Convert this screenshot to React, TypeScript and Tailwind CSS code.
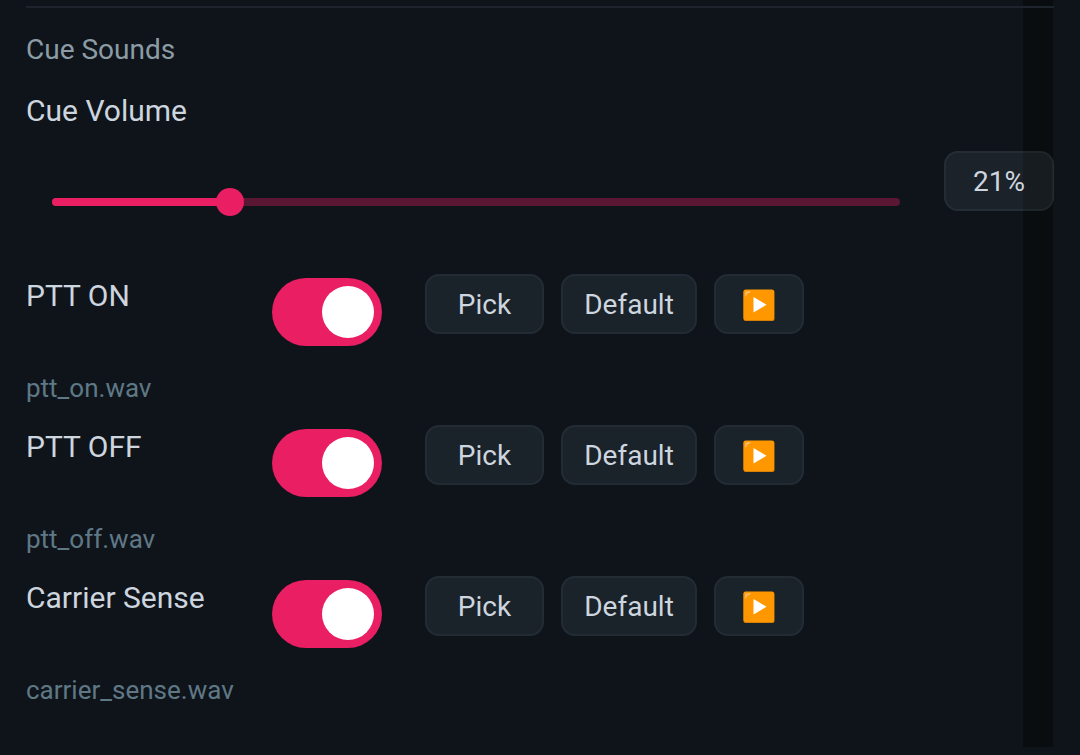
import { useState } from 'react';

const CUES = [
  { id: 'ptt-on', label: 'PTT ON', file: 'ptt_on.wav' },
  { id: 'ptt-off', label: 'PTT OFF', file: 'ptt_off.wav' },
  { id: 'carrier-sense', label: 'Carrier Sense', file: 'carrier_sense.wav' },
];

export default function App() {
  const [volume, setVolume] = useState(21);

  return (
    <div className="relative min-h-screen bg-[#0f141b] font-['Roboto',sans-serif] text-[#cdd5df]">
      {/* Scrollbar shade, sits behind the content */}
      <div className="absolute top-0 right-[27px] bottom-2 w-[30px] bg-[#090d10]" />

      <main className="relative px-[26px] pt-[6px]">
        <hr className="border-t-2 border-[#1e242d]" />

        <h2 className="mt-6 text-[28px] leading-9 text-[#8b9ca5]">Cue Sounds</h2>

        <label htmlFor="cue-volume" className="mt-[25px] block text-[30px] leading-9">
          Cue Volume
        </label>

        <div className="mt-[22px] flex items-start gap-11">
          <div className="relative mt-[47px] ml-[26px] h-2 flex-1 rounded-full bg-[#5a1733]">
            <div className="h-2 rounded-full bg-[#e91e63]" style={{ width: `${volume}%` }} />
            <input
              id="cue-volume"
              type="range"
              min={0}
              max={100}
              value={volume}
              onChange={(e) => setVolume(Number(e.target.value))}
              className="absolute -inset-x-[14px] -top-[10px] h-7 cursor-pointer appearance-none bg-transparent [&::-webkit-slider-thumb]:h-7 [&::-webkit-slider-thumb]:w-7 [&::-webkit-slider-thumb]:appearance-none [&::-webkit-slider-thumb]:rounded-full [&::-webkit-slider-thumb]:bg-[#e91e63]"
            />
          </div>
          <output
            htmlFor="cue-volume"
            className="flex h-[60px] w-[110px] items-center justify-center rounded-[14px] border-2 border-[#94b8c4]/7 bg-[#c0e6f5]/7 pt-[2px] text-[28px]"
          >
            {volume}%
          </output>
        </div>

        <div className="mt-[63px]">
          {CUES.map((cue) => (
            <CueRow key={cue.id} {...cue} />
          ))}
        </div>
      </main>
    </div>
  );
}

function CueRow({ id, label, file }: { id: string; label: string; file: string }) {
  const [enabled, setEnabled] = useState(true);

  return (
    <section className="h-[151px]">
      <div className="flex items-start">
        <label htmlFor={id} className="mt-1 w-[246px] text-[30px] leading-9">
          {label}
        </label>
        <input
          id={id}
          type="checkbox"
          role="switch"
          checked={enabled}
          onChange={(e) => setEnabled(e.target.checked)}
          className="mt-1 h-[68px] w-[110px] cursor-pointer appearance-none rounded-full bg-[#39424c] p-2 before:block before:h-[52px] before:w-[52px] before:rounded-full before:bg-white checked:bg-[#e91e63] checked:before:ml-auto"
        />
        <div className="ml-[43px] flex gap-[17px]">
          <CueButton className="w-[119px]">Pick</CueButton>
          <CueButton className="w-[136px]">Default</CueButton>
          <CueButton className="w-[90px]" label={`Play ${label}`}>
            <PlayIcon />
          </CueButton>
        </div>
      </div>
      <p className="mt-6 text-[26px] leading-9 text-[#5f7886]">{file}</p>
    </section>
  );
}

function CueButton({
  className,
  label,
  children,
}: {
  className: string;
  label?: string;
  children: React.ReactNode;
}) {
  return (
    <button
      type="button"
      aria-label={label}
      className={`flex h-[60px] cursor-pointer items-center justify-center rounded-[14px] border-2 border-[#232c34] bg-[#1a222a] pt-[2px] text-[28px] ${className}`}
    >
      {children}
    </button>
  );
}

function PlayIcon() {
  return (
    <svg width="32" height="32" viewBox="0 0 32 32" aria-hidden="true">
      <rect x="0.5" y="1" width="31" height="31" rx="2" fill="#d87f05" />
      <rect x="0.5" y="0.5" width="30.5" height="30.5" rx="2" fill="#ff9800" />
      <path d="M2 8V4.5Q2 2 4.5 2H8Q7 4 5 4.5Q3.5 6 2 8Z" fill="#ffb95c" />
      <path d="M10.5 8L23.5 15.8L10.5 23.5Z" fill="#fff" />
    </svg>
  );
}
